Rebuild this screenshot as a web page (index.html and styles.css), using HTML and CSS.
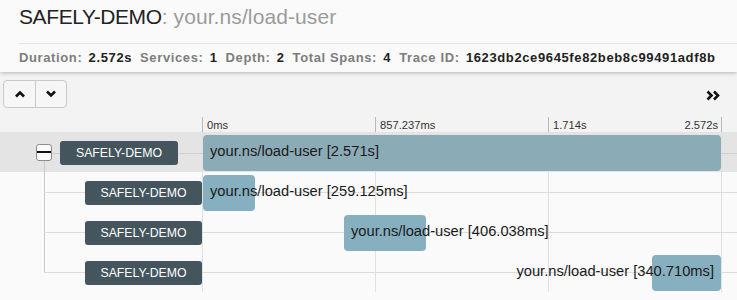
FILE: index.html
```html
<!DOCTYPE html>
<html lang="en">
<head>
  <meta charset="UTF-8" />
  <title>SAFELY-DEMO: your.ns/load-user</title>
  <link rel="stylesheet" href="styles.css">
</head>
<body>
  <!-- Trace header -->
  <div class="trace-header">
    <div class="trace-title">
      <span class="service">SAFELY-DEMO</span><span class="operation">: your.ns/load-user</span>
    </div>
    <div class="trace-stats">
      <span class="stat">Duration: <b>2.572s</b></span>
      <span class="stat">Services: <b>1</b></span>
      <span class="stat">Depth: <b>2</b></span>
      <span class="stat">Total Spans: <b>4</b></span>
      <span class="stat">Trace ID: <b>1623db2ce9645fe82beb8c99491adf8b</b></span>
    </div>
  </div>

  <!-- Toolbar -->
  <div class="toolbar">
    <div class="btn-group">
      <div class="btn">
        <svg width="12" height="8" viewBox="0 0 12 8"><polyline points="2,6.5 6,2.5 10,6.5" fill="none" stroke="#111" stroke-width="2.6"/></svg>
      </div>
      <div class="btn">
        <svg width="12" height="8" viewBox="0 0 12 8"><polyline points="2,1.5 6,5.5 10,1.5" fill="none" stroke="#111" stroke-width="2.6"/></svg>
      </div>
    </div>
    <div class="expand">
      <svg width="15" height="11" viewBox="0 0 15 11"><polyline points="1.5,1.5 5.5,5.5 1.5,9.5" fill="none" stroke="#111" stroke-width="2.6"/><polyline points="8,1.5 12,5.5 8,9.5" fill="none" stroke="#111" stroke-width="2.6"/></svg>
    </div>
  </div>

  <!-- Time ruler -->
  <div class="ruler">
    <div></div>
    <div class="ticks">
      <div class="tick">0ms</div>
      <div class="tick">857.237ms</div>
      <div class="tick last"><span>1.714s</span><span>2.572s</span></div>
    </div>
    <div></div>
  </div>

  <!-- Spans -->
  <div class="spans">
    <div class="span-row root">
      <div class="tree">
        <div class="toggle"></div>
        <div class="badge">SAFELY-DEMO</div>
      </div>
      <div class="timeline">
        <div class="bar root-bar" style="margin-left: 1px; width: 518px;"><span>your.ns/load-user [2.571s]</span></div>
      </div>
      <div></div>
    </div>
    <div class="span-row child">
      <div class="tree"><div class="badge">SAFELY-DEMO</div></div>
      <div class="timeline">
        <div class="bar" style="margin-left: 1px; width: 52px;"><span>your.ns/load-user [259.125ms]</span></div>
      </div>
      <div></div>
    </div>
    <div class="span-row child">
      <div class="tree"><div class="badge">SAFELY-DEMO</div></div>
      <div class="timeline">
        <div class="bar" style="margin-left: 142px; width: 82px;"><span>your.ns/load-user [406.038ms]</span></div>
      </div>
      <div></div>
    </div>
    <div class="span-row child last">
      <div class="tree"><div class="badge">SAFELY-DEMO</div></div>
      <div class="timeline">
        <div class="bar end" style="margin-left: 450px; width: 69px;"><span>your.ns/load-user [340.710ms]</span></div>
      </div>
      <div></div>
    </div>
  </div>
</body>
</html>
```

FILE: styles.css
```css
* {
  box-sizing: border-box;
}

body {
  margin: 0;
  font-family: 'Liberation Sans', Arial, sans-serif;
  color: #222;
  background: #fafafa;
  overflow: hidden;
}

/* header */
.trace-header {
  background: #fafafa;
  padding-left: 19px;
  box-shadow: 0 1px 4px rgba(0, 0, 0, 0.25);
  position: relative;
  z-index: 2;
}

.trace-title {
  height: 44px;
  padding-top: 5px;
  font-size: 21px;
  line-height: 24px;
  border-bottom: 1px solid #e2e2e2;
}

.trace-title .service {
  color: #222;
  letter-spacing: -0.4px;
}

.trace-title .operation {
  color: #9a9a9a;
  letter-spacing: 0.1px;
}

.trace-stats {
  height: 28px;
  display: flex;
  align-items: center;
  gap: 8px;
  font-size: 13px;
  font-weight: 700;
  letter-spacing: 0.62px;
  color: #7d7d7d;
  padding-bottom: 1px;
}

.trace-stats b {
  color: #222;
  margin-left: 2px;
}

/* toolbar */
.toolbar {
  background: #f3f3f3;
  height: 45px;
  padding: 8px 16px 0 3px;
  display: flex;
  justify-content: space-between;
  align-items: flex-start;
}

.btn-group {
  display: flex;
  border: 1px solid #c9c9c9;
  border-radius: 4px;
  height: 28px;
  background: #f6f6f6;
}

.btn {
  width: 31px;
  display: flex;
  align-items: center;
  justify-content: center;
}

.btn + .btn {
  border-left: 1px solid #c9c9c9;
}

.expand {
  padding-top: 7px;
}

/* ruler */
.ruler {
  display: grid;
  grid-template-columns: 202px 520px 1fr;
  height: 15px;
  background: #f3f3f3;
  font-size: 11.2px;
  color: #333;
}

.ticks {
  display: flex;
}

.tick {
  width: 173px;
  border-left: 1px solid #b8b8b8;
  padding-left: 4px;
  line-height: 15px;
  padding-top: 1px;
}

.tick.last {
  width: 174px;
  border-right: 1px solid #b8b8b8;
  display: flex;
  justify-content: space-between;
  padding-right: 3px;
}

/* span rows */
.spans {
  background: #fafafa;
  padding-bottom: 8px;
}

.span-row {
  display: grid;
  grid-template-columns: 202px 520px 1fr;
  height: 40px;
  position: relative;
}

.span-row::before {
  content: '';
  position: absolute;
  left: 44px;
  right: 0;
  top: 20px;
  height: 1px;
  background: #dcdcdc;
}

.span-row.root {
  background: #e4e4e4;
}

.span-row.root::before {
  top: 21px;
  background: #cfcfcf;
}

.tree {
  display: flex;
  align-items: center;
}

.root .tree {
  padding-left: 36px;
  gap: 8px;
  background: linear-gradient(#c8c8c8, #c8c8c8) 44px 29px / 1px 11px no-repeat;
}

.child .tree {
  padding-left: 85px;
  background: linear-gradient(#c8c8c8, #c8c8c8) 44px 0 / 1px 100% no-repeat;
}

.child.last .tree {
  background: linear-gradient(#c8c8c8, #c8c8c8) 44px 0 / 1px 21px no-repeat;
}

.toggle {
  width: 16px;
  height: 17px;
  border: 1px solid #8d8d8d;
  border-radius: 3px;
  background: #fbfbfb;
  position: relative;
  margin-top: 1px;
}

.toggle::after {
  content: '';
  position: absolute;
  left: 0;
  right: 0;
  top: 6px;
  height: 2px;
  background: #111;
}

.badge {
  position: relative;
  width: 118px;
  height: 24px;
  border-radius: 3px;
  background: #44555e;
  color: #fff;
  font-size: 12.3px;
  display: flex;
  align-items: center;
  justify-content: center;
  margin-top: 1px;
}

.root .badge {
  margin-top: 2px;
}

.timeline {
  background-image: linear-gradient(to right, #e0e0e0 1px, transparent 1px);
  background-size: 173px 100%;
  padding-top: 3px;
}

.bar {
  position: relative;
  height: 36px;
  border-radius: 4px;
  background: #86afc0;
  display: flex;
  align-items: center;
  padding: 0 7px 4px 7px;
  font-size: 14.7px;
  white-space: nowrap;
  color: #1a1a1a;
}

.bar.root-bar {
  background: #8babb7;
}

.bar.end {
  justify-content: flex-end;
}
```
